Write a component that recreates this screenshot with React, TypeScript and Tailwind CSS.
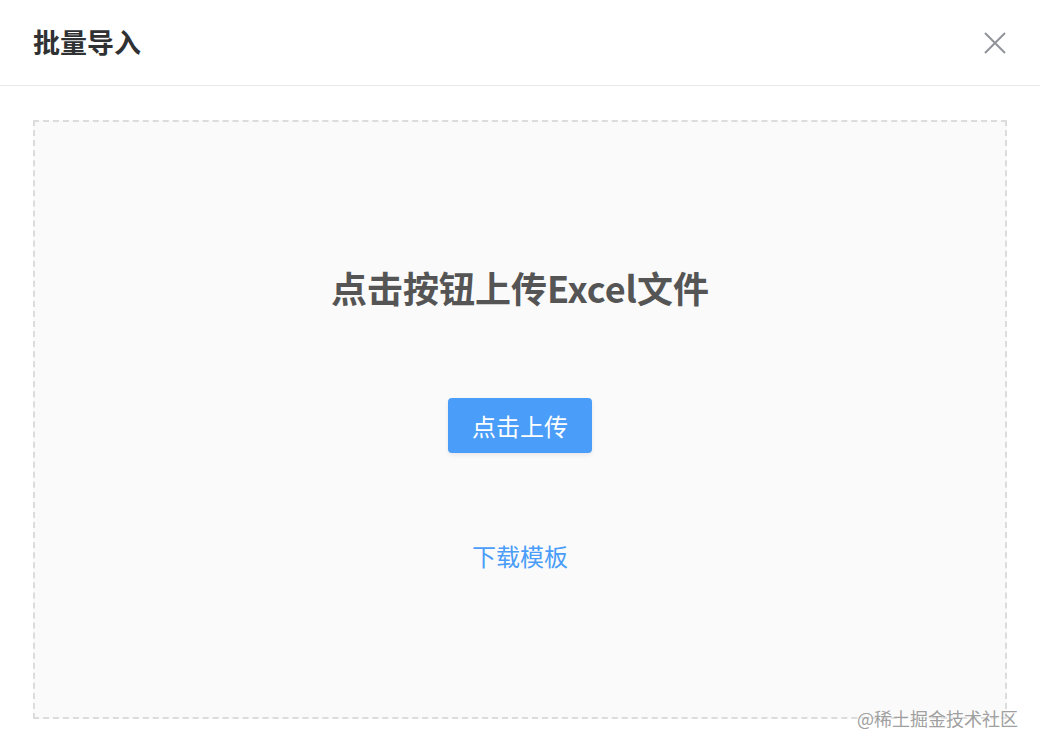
export default function App() {
  return (
    <div
      className="w-[1040px] h-[750px] bg-white flex flex-col relative overflow-hidden"
      style={{ fontFamily: '"PingFang SC", "Noto Sans CJK SC", "Noto Sans", sans-serif' }}
    >
      <header className="h-[86px] shrink-0 flex items-center justify-between pl-[33px] pr-[34px] border-b border-[#e8e8e8]">
        <h1 className="text-[27px] font-bold text-[#303133] leading-none -mt-[3px]">批量导入</h1>
        <button className="text-[#909399]" title="关闭">
          <svg width="22" height="22" viewBox="0 0 22 22" fill="none" stroke="currentColor" strokeWidth="2">
            <path d="M1 1L21 21M21 1L1 21" />
          </svg>
        </button>
      </header>

      <div className="flex-1 pt-[34px] px-[33px] pb-[30px]">
        <div className="h-[599px] bg-[#fafafa] border-2 border-dashed border-[#dcdcdc] flex flex-col items-center">
          <h2 className="mt-[143px] text-[36px] font-bold text-[#555555] leading-[44px]">
            点击按钮上传Excel文件
          </h2>
          <button className="mt-[89px] w-[144px] h-[55px] rounded-[4px] bg-[#4a9df8] text-white text-[24px] shadow-[0_2px_4px_rgba(0,0,0,0.08)]">
            点击上传
          </button>
          <a className="mt-[86px] text-[24px] text-[#4a9df8] leading-[34px] cursor-pointer">下载模板</a>
        </div>
      </div>

      <div className="absolute right-[22px] bottom-[23px] text-[18px] text-[#a0a0a0] leading-none [text-shadow:0_0_3px_#fff]">
        @稀土掘金技术社区
      </div>
    </div>
  );
}
